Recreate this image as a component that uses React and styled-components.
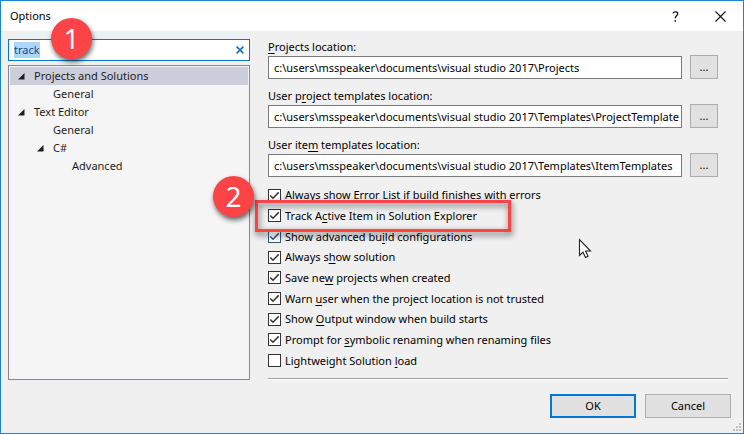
import React, { useEffect, useRef } from 'react';
import styled, { createGlobalStyle } from 'styled-components';

const GlobalStyle = createGlobalStyle`
  *, *::before, *::after { box-sizing: border-box; }
  body { margin: 0; }
  body, button, input { font: 11px/16px "Noto Sans", "Open Sans", sans-serif; color: #000; }
  u { text-underline-offset: 2px; text-decoration-skip-ink: none; }
`;

const Dialog = styled.form`
  position: relative;
  display: flex;
  flex-direction: column;
  min-height: 100vh;
  border: 1px solid #1883d7;
  background: #f0f0f0;
`;

const TitleBar = styled.header`
  display: flex;
  align-items: center;
  height: 30px;
  padding-left: 9px;
  background: #fff;
`;

const Title = styled.h1`
  flex: 1;
  margin: 0;
  font-size: 11px;
  font-weight: 400;
`;

const CaptionButton = styled.button`
  display: grid;
  place-items: center;
  width: 45px;
  height: 30px;
  padding: 0;
  border: 0;
  background: none;
`;

const Content = styled.main`
  flex: 1;
  display: grid;
  grid-template-columns: 242px minmax(0, 1fr);
  column-gap: 18px;
  padding: 8px 15px 0 7px;
`;

const Sidebar = styled.nav`
  display: flex;
  flex-direction: column;
  gap: 4px;
`;

const SearchBox = styled.div`
  position: relative;
  display: flex;
  align-items: center;
  height: 22px;
  border: 1px solid #007acc;
  background: #fff;
`;

const SearchInput = styled.input`
  flex: 1;
  min-width: 0;
  height: 16px;
  padding: 0 5px;
  border: 0;
  outline: 0;
  background: none;
  color: #1e3a5c;
  &::selection { background: #add6ff; color: #1e4a78; }
`;

const ClearButton = styled.button`
  display: grid;
  place-items: center;
  width: 19px;
  height: 20px;
  padding: 0;
  border: 0;
  background: none;
`;

const Tree = styled.ul`
  flex: 1;
  margin: 0;
  padding: 1px;
  list-style: none;
  border: 1px solid #828790;
  background: #f5f5f5;
`;

const TreeItem = styled.li`
  display: flex;
  align-items: center;
  height: 18px;
  padding-left: ${(p) => p.$level * 19 + 8}px;
  background: ${(p) => (p.$selected ? '#cccedb' : 'transparent')};
  color: #1e1e1e;
`;

const Expander = styled.span`
  display: flex;
  width: 16px;
`;

const Panel = styled.section`
  display: flex;
  flex-direction: column;
`;

const Fields = styled.div`
  display: grid;
  row-gap: 9px;
  margin-bottom: 8px;
`;

const Field = styled.div`
  display: grid;
  grid-template-columns: minmax(0, 1fr) 28px;
  column-gap: 8px;
  align-items: center;
  padding-right: 10px;
`;

const FieldLabel = styled.label`
  grid-column: 1 / -1;
  height: 16px;
`;

const PathInput = styled.input`
  width: 100%;
  height: 23px;
  padding: 0 2px 0 5px;
  border: 1px solid #7a7a7a;
  background: #fff;
`;

const PushButton = styled.button`
  width: ${(p) => (p.$wide ? '86px' : '28px')};
  height: 24px;
  padding: 0;
  border: ${(p) => (p.$primary ? '2px solid #0078d7' : '1px solid #adadad')};
  background: #e1e1e1;
`;

const Options = styled.div`
  display: grid;
  grid-template-rows: repeat(9, 1fr);
  height: 186px;
`;

const OptionRow = styled.div`
  position: relative;
  display: flex;
  align-items: center;
`;

const OptionLabel = styled.label`
  display: flex;
  align-items: center;
  gap: 4px;
  white-space: pre;
`;

const Box = styled.span`
  position: relative;
  display: grid;
  width: 13px;
  height: 13px;
  color: ${(p) => (p.$hot ? '#2b5a80' : '#333')};
`;

const Tick = styled.svg`
  grid-area: 1 / 1;
  width: 13px;
  height: 13px;
  visibility: hidden;
  pointer-events: none;
  z-index: 1;
`;

const CheckInput = styled.input`
  grid-area: 1 / 1;
  appearance: none;
  width: 13px;
  height: 13px;
  margin: 0;
  border: 1px solid currentColor;
  background: #fff;
  color: inherit;
  &:checked + ${Tick} { visibility: visible; }
`;

const Divider = styled.hr`
  width: 100%;
  height: 2px;
  margin: 7px 0 0;
  border: 0;
  border-top: 1px solid #a0a0a0;
  background: #fff;
`;

const Footer = styled.footer`
  display: flex;
  justify-content: flex-end;
  gap: 9px;
  padding: 14px 12px 15px;
`;

const Grip = styled.svg`
  position: absolute;
  right: 2px;
  bottom: 2px;
`;

const Badge = styled.span`
  position: absolute;
  z-index: 3;
  left: ${(p) => p.$left}px;
  top: ${(p) => p.$top}px;
  width: 41px;
  height: 41px;
  border-radius: 50%;
  background: #fc4346;
  box-shadow: 1px 3px 5px rgba(0, 0, 0, 0.6);
  color: #fff;
  font-size: 28px;
  font-weight: 400;
  line-height: 40px;
  text-align: center;
`;

const Highlight = styled.span`
  position: absolute;
  z-index: 2;
  left: -13px;
  top: -6px;
  width: 256px;
  height: 32px;
  border: 3px solid #fc4346;
  filter: drop-shadow(1px 3px 3px rgba(0, 0, 0, 0.6));
  pointer-events: none;
`;

const Pointer = styled.svg`
  position: absolute;
  left: 577px;
  top: 237px;
`;

const tree = [
  { label: 'Projects and Solutions', level: 0, open: true, selected: true },
  { label: 'General', level: 1 },
  { label: 'Text Editor', level: 0, open: true },
  { label: 'General', level: 1 },
  { label: 'C#', level: 1, open: true },
  { label: 'Advanced', level: 2 },
];

const root = 'c:\\users\\msspeaker\\documents\\visual studio 2017\\';

const fields = [
  { id: 'projects', label: <><u>P</u>rojects location:</>, value: root + 'Projects' },
  { id: 'project-templates', label: <>User p<u>r</u>oject templates location:</>, value: root + 'Templates\\ProjectTemplates' },
  { id: 'item-templates', label: <>User ite<u>m</u> templates location:</>, value: root + 'Templates\\ItemTemplates' },
];

const options = [
  { label: <>Always show Error List if build finishes with errors</>, checked: true },
  { label: <>Track A<u>c</u>tive Item in Solution Explorer</>, checked: true, marked: true },
  { label: <>Show advanced bu<u>i</u>ld configurations</>, checked: true, hot: true },
  { label: <>Always s<u>h</u>ow solution</>, checked: true },
  { label: <>Save ne<u>w</u> projects when created</>, checked: true },
  { label: <>Warn <u>u</u>ser when the project location is not trusted</>, checked: true },
  { label: <>Show <u>O</u>utput window when build starts</>, checked: true },
  { label: <>Prompt for <u>s</u>ymbolic renaming when renaming files</>, checked: true },
  { label: <>Lightweight Solution <u>l</u>oad</>, checked: false },
];

export default function App() {
  const search = useRef(null);

  useEffect(() => {
    search.current.focus();
    search.current.select();
  }, []);

  return (
    <>
      <GlobalStyle />
      <Dialog onSubmit={(e) => e.preventDefault()}>
        <TitleBar>
          <Title>Options</Title>
          <CaptionButton type="button" aria-label="Help">
            <svg width="7" height="11" viewBox="0 0 7 11" fill="none" stroke="#111" strokeWidth="1.3">
              <path d="M1 2.4C1.3 1.1 2.3.8 3.4.8C5 .8 5.7 1.6 5.7 2.8C5.7 4.7 3.2 4.9 3.2 7.2" />
              <path d="M3.2 9V10.7" />
            </svg>
          </CaptionButton>
          <CaptionButton type="button" aria-label="Close">
            <svg width="11" height="11" viewBox="0 0 11 11" stroke="#111" strokeWidth="1.1">
              <path d="M.5.5L10.5 10.5M10.5.5L.5 10.5" />
            </svg>
          </CaptionButton>
        </TitleBar>
        <Content>
          <Sidebar aria-label="Option pages">
            <SearchBox>
              <SearchInput ref={search} aria-label="Search options" defaultValue="track" spellCheck={false} />
              <ClearButton type="button" aria-label="Clear search">
                <svg width="8" height="8" viewBox="0 0 8 8" stroke="#1c75bc" strokeWidth="1.7">
                  <path d="M.6.6L7.4 7.4M7.4.6L.6 7.4" />
                </svg>
              </ClearButton>
              <Badge $left={42} $top={-22}>1</Badge>
            </SearchBox>
            <Tree>
              {tree.map((item, i) => (
                <TreeItem key={i} $level={item.level} $selected={item.selected}>
                  <Expander>
                    {item.open && (
                      <svg width="7" height="7" viewBox="0 0 7 7" fill="#1e1e1e">
                        <path d="M6.5 0V6.5H0Z" />
                      </svg>
                    )}
                  </Expander>
                  {item.label}
                </TreeItem>
              ))}
            </Tree>
          </Sidebar>
          <Panel>
            <Fields>
              {fields.map((f) => (
                <Field key={f.id}>
                  <FieldLabel htmlFor={f.id}>{f.label}</FieldLabel>
                  <PathInput id={f.id} defaultValue={f.value} spellCheck={false} />
                  <PushButton type="button">...</PushButton>
                </Field>
              ))}
            </Fields>
            <Options>
              {options.map((o, i) => (
                <OptionRow key={i}>
                  <OptionLabel>
                    <Box $hot={o.hot}>
                      <CheckInput type="checkbox" defaultChecked={o.checked} />
                      <Tick viewBox="0 0 13 13" fill="none" stroke="currentColor" strokeWidth="1.5">
                        <path d="M2.3 6.5L5 9.2L10.7 3.4" />
                      </Tick>
                    </Box>
                    <span>{o.label}</span>
                  </OptionLabel>
                  {o.marked && <Highlight />}
                  {o.marked && <Badge $left={-55} $top={-30}>2</Badge>}
                </OptionRow>
              ))}
            </Options>
            <Divider />
          </Panel>
        </Content>
        <Footer>
          <PushButton $wide $primary type="submit">OK</PushButton>
          <PushButton $wide type="button">Cancel</PushButton>
        </Footer>
        <Grip width="8" height="8" viewBox="0 0 8 8" fill="#bfbfbf" aria-hidden="true">
          <path d="M6 0h2v2H6zM3 3h2v2H3zM6 3h2v2H6zM0 6h2v2H0zM3 6h2v2H3zM6 6h2v2H6z" />
        </Grip>
        <Pointer width="14" height="22" viewBox="0 0 14 22" aria-hidden="true">
          <path d="M1.5 1.5V17.5L5 14.2L7.5 19.5L10 18.3L7.6 13H12.5Z" fill="#fff" stroke="#222" strokeWidth="1.1" />
        </Pointer>
      </Dialog>
    </>
  );
}
